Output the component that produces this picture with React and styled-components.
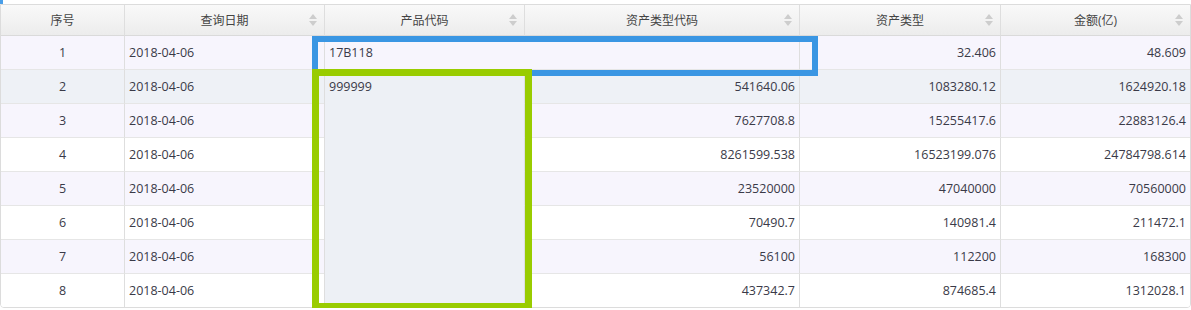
import React from 'react';
import styled, { createGlobalStyle } from 'styled-components';

const GlobalStyle = createGlobalStyle`
  body {
    margin: 0;
    background: #fff;
    font-family: "Open Sans", "Noto Sans CJK SC", sans-serif;
  }
`;

const columns = [
  { key: 'no', title: '序号', width: 123, align: 'center', sortable: false },
  { key: 'date', title: '查询日期', width: 200, align: 'left', sortable: true },
  { key: 'code', title: '产品代码', width: 200, align: 'left', sortable: true },
  { key: 'typeCode', title: '资产类型代码', width: 275, align: 'right', sortable: true },
  { key: 'type', title: '资产类型', width: 201, align: 'right', sortable: true },
  { key: 'amount', title: '金额(亿)', width: 190, align: 'right', sortable: true },
];

const rows = [
  { no: 1, date: '2018-04-06', code: '17B118', typeCode: '', type: '32.406', amount: '48.609' },
  { no: 2, date: '2018-04-06', code: '999999', typeCode: '541640.06', type: '1083280.12', amount: '1624920.18' },
  { no: 3, date: '2018-04-06', typeCode: '7627708.8', type: '15255417.6', amount: '22883126.4' },
  { no: 4, date: '2018-04-06', typeCode: '8261599.538', type: '16523199.076', amount: '24784798.614' },
  { no: 5, date: '2018-04-06', typeCode: '23520000', type: '47040000', amount: '70560000' },
  { no: 6, date: '2018-04-06', typeCode: '70490.7', type: '140981.4', amount: '211472.1' },
  { no: 7, date: '2018-04-06', typeCode: '56100', type: '112200', amount: '168300' },
  { no: 8, date: '2018-04-06', typeCode: '437342.7', type: '874685.4', amount: '1312028.1' },
];

const Page = styled.div`
  position: relative;
  width: 1191px;
`;

const CornerMark = styled.div`
  width: 3px;
  height: 4px;
  background: #4a9ee8;
`;

const Grid = styled.table`
  border-collapse: separate;
  border-spacing: 0;
  table-layout: fixed;
  width: 1191px;
  border: 1px solid #dcdcdc;
  border-radius: 0 0 4px 4px;
  overflow: hidden;
  color: #3a3a48;
`;

const HeadCell = styled.th`
  position: relative;
  height: 30px;
  padding: 0;
  font-weight: normal;
  font-size: 12px;
  color: #444;
  text-align: center;
  background: linear-gradient(#f9f9f9, #ececec);
  border-bottom: 1px solid #dadada;
  border-left: ${(p) => (p.$first ? 'none' : '1px solid #dedede')};
`;

const SortIcon = styled.span`
  position: absolute;
  right: 7px;
  top: 9px;
  display: flex;
  flex-direction: column;
  gap: 2px;

  &::before,
  &::after {
    content: '';
    border-left: 4px solid transparent;
    border-right: 4px solid transparent;
  }
  &::before {
    border-bottom: 5px solid #cdcdcd;
  }
  &::after {
    border-top: 5px solid #cdcdcd;
  }
`;

const Row = styled.tr`
  background: ${(p) => p.$bg};
`;

const Cell = styled.td`
  height: 33px;
  padding: 0 4px;
  font-size: 12.5px;
  text-align: ${(p) => p.$align};
  vertical-align: ${(p) => (p.$top ? 'top' : 'middle')};
  line-height: ${(p) => (p.$top ? '33px' : 'normal')};
  white-space: nowrap;
  overflow: hidden;
  border-top: ${(p) => (p.$firstRow ? 'none' : '1px solid #e6e6e6')};
  border-left: ${(p) => (p.$first ? 'none' : '1px solid #dedede')};
  background: ${(p) => p.$fill || 'transparent'};
`;

const Highlight = styled.div`
  position: absolute;
  left: ${(p) => p.$left}px;
  top: ${(p) => p.$top}px;
  width: ${(p) => p.$width}px;
  height: ${(p) => p.$height}px;
  box-sizing: border-box;
  border: ${(p) => p.$stroke}px solid ${(p) => p.$color};
  pointer-events: none;
`;

const rowBg = (i) => {
  if (i === 1) return '#eef1f6';
  return i % 2 === 0 ? '#f7f5fd' : '#ffffff';
};

export default function App() {
  return (
    <Page>
      <GlobalStyle />
      <CornerMark />
      <Grid>
        <colgroup>
          {columns.map((c) => (
            <col key={c.key} style={{ width: c.width }} />
          ))}
        </colgroup>
        <thead>
          <tr>
            {columns.map((c, i) => (
              <HeadCell key={c.key} $first={i === 0}>
                {c.title}
                {c.sortable && <SortIcon />}
              </HeadCell>
            ))}
          </tr>
        </thead>
        <tbody>
          {rows.map((r, i) => (
            <Row key={r.no} $bg={rowBg(i)}>
              <Cell $align="center" $first $firstRow={i === 0}>{r.no}</Cell>
              <Cell $align="left" $firstRow={i === 0}>{r.date}</Cell>
              {i === 0 && (
                <Cell $align="left" colSpan={2} $firstRow>{r.code}</Cell>
              )}
              {i === 1 && (
                <Cell $align="left" rowSpan={7} $top $fill="#edf0f5">{r.code}</Cell>
              )}
              {i > 0 && <Cell $align="right">{r.typeCode}</Cell>}
              <Cell $align="right" $firstRow={i === 0}>{r.type}</Cell>
              <Cell $align="right" $firstRow={i === 0}>{r.amount}</Cell>
            </Row>
          ))}
        </tbody>
      </Grid>
      <Highlight $left={312} $top={36} $width={506} $height={40} $stroke={6} $color="#3a96e3" />
      <Highlight $left={312} $top={69} $width={220} $height={241} $stroke={7} $color="#99cc00" />
    </Page>
  );
}
